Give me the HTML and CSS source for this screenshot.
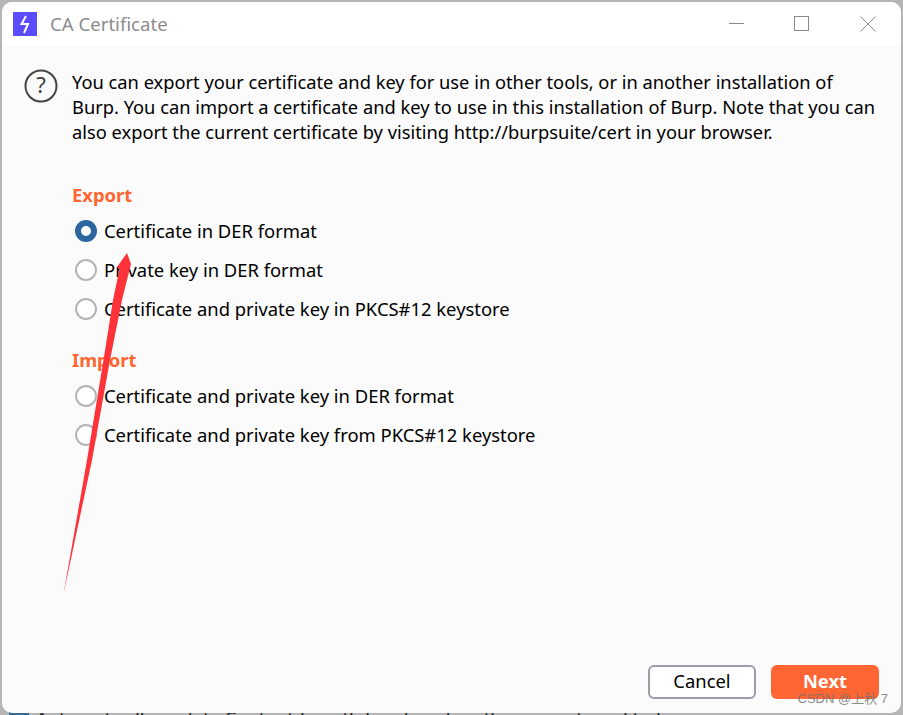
FILE: index.html
```html
<!DOCTYPE html>
<html lang="en">
<head>
<meta charset="utf-8">
<title>CA Certificate</title>
<link rel="stylesheet" href="styles.css">
</head>
<body>
<div class="backdrop-row"><span class="backdrop-check"></span><span>Automatically update Content-Length header when the request is edited</span></div>
<div class="window">
  <header class="titlebar">
    <div class="title-left">
      <svg class="logo" viewBox="0 0 24 24" width="24" height="24"><rect width="24" height="24" fill="#5b4dff"/><path d="M13 4 8.500 12h6.500L11 21" fill="none" stroke="#fff" stroke-width="2"/></svg>
      <span class="title">CA Certificate</span>
    </div>
    <div class="controls">
      <svg width="16" height="16" viewBox="0 0 16 16"><path d="M1 7.500h15" stroke="#8a8a8a" stroke-width="1"/></svg>
      <svg width="16" height="16" viewBox="0 0 16 16"><rect x=".5" y=".5" width="14" height="14" fill="none" stroke="#8a8a8a" stroke-width="1"/></svg>
      <svg width="16" height="16" viewBox="0 0 16 16"><path d="M.5.5l15 15M15.500.5l-15 15" stroke="#8a8a8a" stroke-width="1"/></svg>
    </div>
  </header>
  <main class="content">
    <div class="intro">
      <svg class="help" viewBox="0 0 34 34" width="34" height="34"><circle cx="17" cy="17" r="15.500" fill="none" stroke="#444" stroke-width="2"/><text x="17" y="24" text-anchor="middle" class="help-mark">?</text></svg>
      <p class="intro-text">You can export your certificate and key for use in other tools, or in another installation of Burp. You can import a certificate and key to use in this installation of Burp. Note that you can also export the current certificate by visiting http://burpsuite/cert in your browser.</p>
    </div>
    <section class="group">
      <h2 class="group-title">Export</h2>
      <label class="option"><span class="radio radio-on"></span>Certificate in DER format</label>
      <label class="option"><span class="radio"></span>Private key in DER format</label>
      <label class="option"><span class="radio"></span>Certificate and private key in PKCS#12 keystore</label>
    </section>
    <section class="group group-import">
      <h2 class="group-title">Import</h2>
      <label class="option"><span class="radio"></span>Certificate and private key in DER format</label>
      <label class="option"><span class="radio"></span>Certificate and private key from PKCS#12 keystore</label>
    </section>
    <footer class="actions">
      <button class="btn btn-cancel">Cancel</button>
      <button class="btn btn-next">Next</button>
    </footer>
  </main>
</div>
<svg class="arrow" width="903" height="715" viewBox="0 0 903 715"><path d="M127 253 131 264 122 300 110 360 92 460 63.500 594 87 460 103.500 360 113 300 119.500 269 117 267Z" fill="#fd3339"/></svg>
<div class="watermark">CSDN @上秋 7</div>
</body>
</html>
```
FILE: styles.css
```css
* { box-sizing: border-box; }
html, body { margin: 0; height: 100%; }
body {
  position: relative;
  width: 903px;
  height: 715px;
  overflow: hidden;
  background: #b5b5b5;
  font-family: "Noto Sans", "Noto Sans CJK SC", sans-serif;
  color: #000;
}
.backdrop-row {
  position: absolute;
  left: 9px;
  top: 706px;
  display: flex;
  align-items: flex-start;
  gap: 7px;
  font-size: 18.4px;
  line-height: 24px;
  color: #222;
  white-space: nowrap;
}
.backdrop-check {
  display: block;
  width: 20px;
  height: 20px;
  background: #3a6a8f;
}
.window {
  position: absolute;
  left: 2px;
  top: 2px;
  width: 899px;
  height: 711px;
  border-radius: 10px;
  overflow: hidden;
  display: flex;
  flex-direction: column;
  background: #fbfbfb;
}
.titlebar {
  height: 44px;
  flex: none;
  background: #fff;
  display: flex;
  align-items: center;
  justify-content: space-between;
  padding: 0 25px 0 11px;
}
.title-left { display: flex; align-items: center; gap: 13px; }
.logo { display: block; }
.title { font-size: 18.6px; color: #8c8c8c; padding-bottom: 2px; }
.controls { display: flex; gap: 50px; align-items: center; }
.controls svg { display: block; }
.content {
  flex: 1;
  display: flex;
  flex-direction: column;
  padding: 23px 22px 14px 22px;
}
.intro { display: flex; gap: 14px; align-items: flex-start; margin-right: -3px; }
.help { flex: none; }
.help-mark { font-size: 22px; fill: #444; font-family: "Noto Sans", sans-serif; }
.intro-text {
  margin: 0;
  font-size: 18.3px;
  line-height: 25px;
}
.group { margin-left: 48px; margin-top: 38px; }
.group-import { margin-top: 19px; }
.group-title {
  margin: 0 0 3px;
  font-size: 18.4px;
  line-height: 26px;
  font-weight: 700;
  color: #ff6633;
}
.option {
  display: flex;
  align-items: center;
  gap: 7px;
  height: 39px;
  font-size: 18.4px;
  margin-left: 3px;
}
.radio {
  flex: none;
  width: 22px;
  height: 22px;
  border-radius: 50%;
  border: 2px solid #b4b4b4;
  background: #fff;
}
.radio-on { border: 6px solid #2b669f; }
.actions {
  margin-top: auto;
  display: flex;
  justify-content: flex-end;
  gap: 15px;
}
.btn {
  width: 108px;
  height: 34px;
  border-radius: 6px;
  font-family: inherit;
  font-size: 18.4px;
  padding: 0 0 4px;
}
.btn-cancel { background: #fff; border: 2px solid #9c9cae; color: #000; }
.btn-next { background: #ff6633; border: none; color: #fff; font-weight: 700; }
.arrow { position: absolute; left: 0; top: 0; pointer-events: none; }
.watermark {
  position: absolute;
  right: 15px;
  top: 690px;
  font-family: "Liberation Sans", "Noto Sans CJK SC", sans-serif;
  font-size: 13px;
  line-height: 18px;
  color: rgba(110,110,110,.8);
}
```
